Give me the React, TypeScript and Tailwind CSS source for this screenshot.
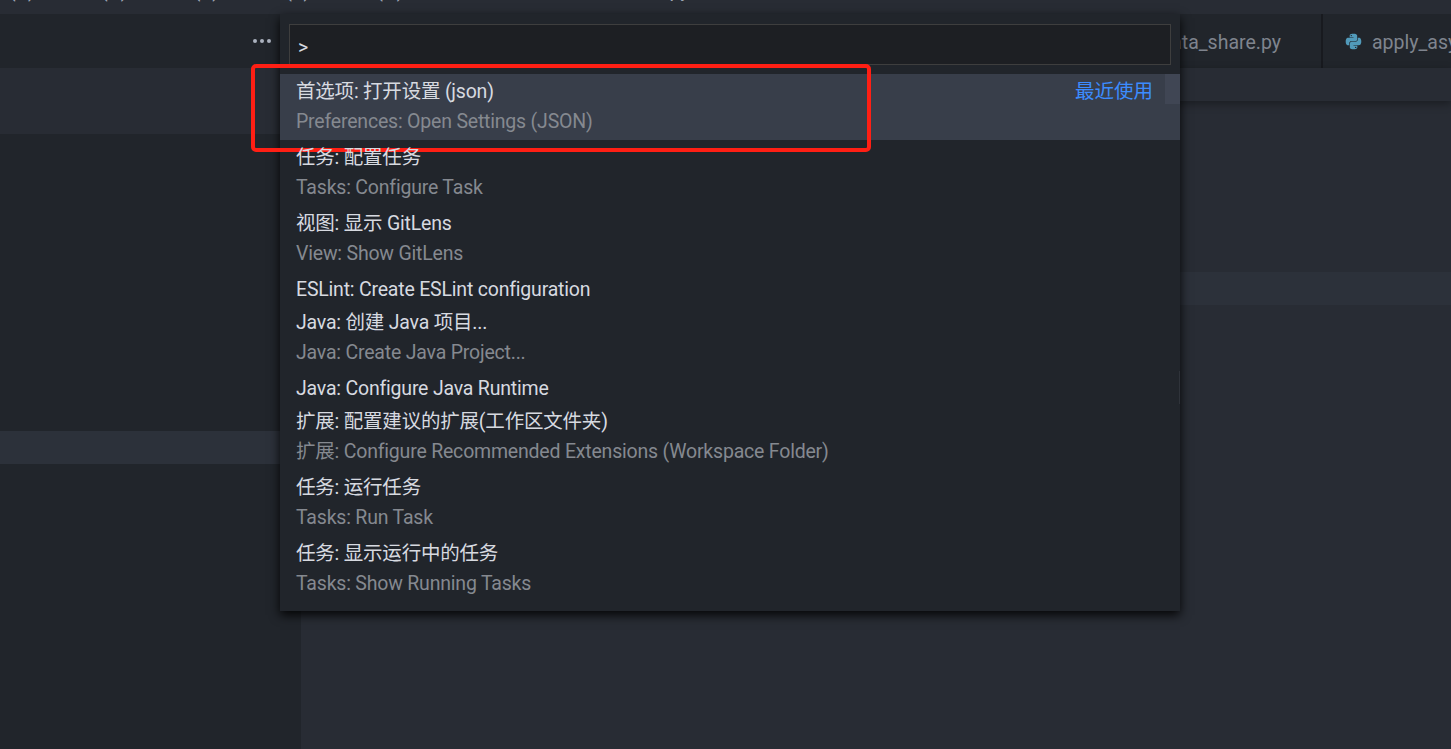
const FONT = "font-['Roboto','Noto_Sans_CJK_SC',sans-serif]"

type Item = { label: string; detail?: string; active?: boolean }

const items: Item[] = [
  { label: '首选项: 打开设置 (json)', detail: 'Preferences: Open Settings (JSON)', active: true },
  { label: '任务: 配置任务', detail: 'Tasks: Configure Task' },
  { label: '视图: 显示 GitLens', detail: 'View: Show GitLens' },
  { label: 'ESLint: Create ESLint configuration' },
  { label: 'Java: 创建 Java 项目...', detail: 'Java: Create Java Project...' },
  { label: 'Java: Configure Java Runtime' },
  { label: '扩展: 配置建议的扩展(工作区文件夹)', detail: '扩展: Configure Recommended Extensions (Workspace Folder)' },
  { label: '任务: 运行任务', detail: 'Tasks: Run Task' },
  { label: '任务: 显示运行中的任务', detail: 'Tasks: Show Running Tasks' },
]

const menus = ['查看(V)', '转到(G)', '运行(R)', '终端(T)', '帮助(H)']

const PythonIcon = () => (
  <svg viewBox="0 0 24 24" className="h-[17px] w-[17px]" fill="#519aba">
    <path d="M11.9 1C6.3 1 6.6 3.4 6.6 3.4v2.5h5.4v.8H4.5S1 6.3 1 11.9s3.1 5.4 3.1 5.4H6v-2.6s-.1-3.1 3-3.1h5.3s2.9 0 2.9-2.8V3.9S17.6 1 11.9 1zM8.9 2.7a1 1 0 1 1 0 2 1 1 0 0 1 0-2z" />
    <path d="M12.1 23c5.6 0 5.3-2.4 5.3-2.4v-2.5H12v-.8h7.5s3.5.4 3.5-5.2-3.1-5.4-3.1-5.4H18v2.6s.1 3.1-3 3.1H9.7s-2.9 0-2.9 2.8v4.9S6.4 23 12.1 23zm3-1.7a1 1 0 1 1 0-2 1 1 0 0 1 0 2z" />
  </svg>
)

const PaletteRow = ({ label, detail, active }: Item) => (
  <div className={`relative flex flex-col px-4 tracking-[-0.2px] ${active ? 'bg-[#383e4a]' : ''}`}>
    <div className="relative z-10 flex h-[33px] items-center justify-between pt-[2px] text-[19.5px] text-[#d7dae0]">
      <span>{label}</span>
      {active && <span className="pr-[11px] tracking-normal text-[#3c8cff]">最近使用</span>}
    </div>
    {detail && <div className="flex h-[33px] items-center pb-[4px] text-[19.5px] text-[#858990]">{detail}</div>}
    {active && <div className="absolute right-0 top-0 h-[30px] w-[15px] bg-[#404654]" />}
  </div>
)

const App = () => {
  return (
    <div className={`relative flex h-[749px] w-[1451px] flex-col overflow-hidden bg-[#282c34] ${FONT}`}>
      {/* title bar, the screenshot crops the menu text */}
      <div className="relative h-[14px] shrink-0 overflow-hidden bg-[#282c34] text-[19.5px] leading-[24px] text-[#9da5b4]">
        <div className="absolute -left-[30px] -top-[21px] flex gap-[27px] whitespace-nowrap">
          {menus.map((m) => (
            <span key={m}>{m}</span>
          ))}
        </div>
        <div className="absolute left-[560px] -top-[21px] whitespace-nowrap">_data_share.py</div>
      </div>

      <div className="flex min-h-0 flex-1">
        {/* sidebar */}
        <div className="flex w-[301px] shrink-0 flex-col bg-[#21252b]">
          <div className="flex h-[54px] shrink-0 items-center justify-end pr-[30px]">
            <span className="flex gap-[3px]">
              <i className="h-[4px] w-[4px] rounded-full bg-[#abb2bf]" />
              <i className="h-[4px] w-[4px] rounded-full bg-[#abb2bf]" />
              <i className="h-[4px] w-[4px] rounded-full bg-[#abb2bf]" />
            </span>
          </div>
          <div className="h-[66px] shrink-0 bg-[#282c34]" />
          <div className="h-[297px] shrink-0" />
          <div className="h-[33px] shrink-0 bg-[#2c313a]" />
        </div>

        {/* editor */}
        <div className="flex min-w-0 flex-1 flex-col">
          <div className="flex h-[54px] shrink-0 justify-end bg-[#21252b] text-[19.5px] text-[#7f848e]">
            <div className="flex w-[200px] items-center justify-end overflow-hidden border-r-2 border-[#181a1f] pr-[40px] pt-[3px]">
              <span className="whitespace-nowrap">data_share.py</span>
            </div>
            <div className="flex w-[128px] items-center gap-[10px] pl-[22px]">
              <span className="shrink-0"><PythonIcon /></span>
              <span className="whitespace-nowrap pt-[3px]">apply_asy</span>
            </div>
          </div>
          <div className="h-[33px] shrink-0 bg-[#282c34] shadow-[0_3px_8px_rgba(0,0,0,0.35)]" />
          <div className="mt-[171px] h-[33px] shrink-0 bg-[#2c313a]" />
        </div>
      </div>

      {/* command palette */}
      <div className="absolute left-[280px] top-[14px] h-[597px] w-[900px] bg-[#21252b] shadow-[0_4px_10px_rgba(0,0,0,0.9)]">
        <div className="px-[9px] pb-[9px] pt-[10px]">
          <div className="flex h-[41px] items-center border border-[#3e3e3e] bg-[#1d1f23] pl-[8px] pt-[6px] text-[19.5px] text-[#d7dae0]">&gt;</div>
        </div>
        <div className="flex flex-col">
          {items.map((item) => (
            <PaletteRow key={item.label} {...item} />
          ))}
        </div>
        <div className="absolute right-0 top-[357px] h-[33px] w-px bg-[#2f333a]" />
      </div>

      {/* red annotation */}
      <div className="absolute left-[251px] top-[64px] h-[88px] w-[620px] rounded-[5px] border-[4px] border-[#ff1f14]" />
    </div>
  )
}

export default App
